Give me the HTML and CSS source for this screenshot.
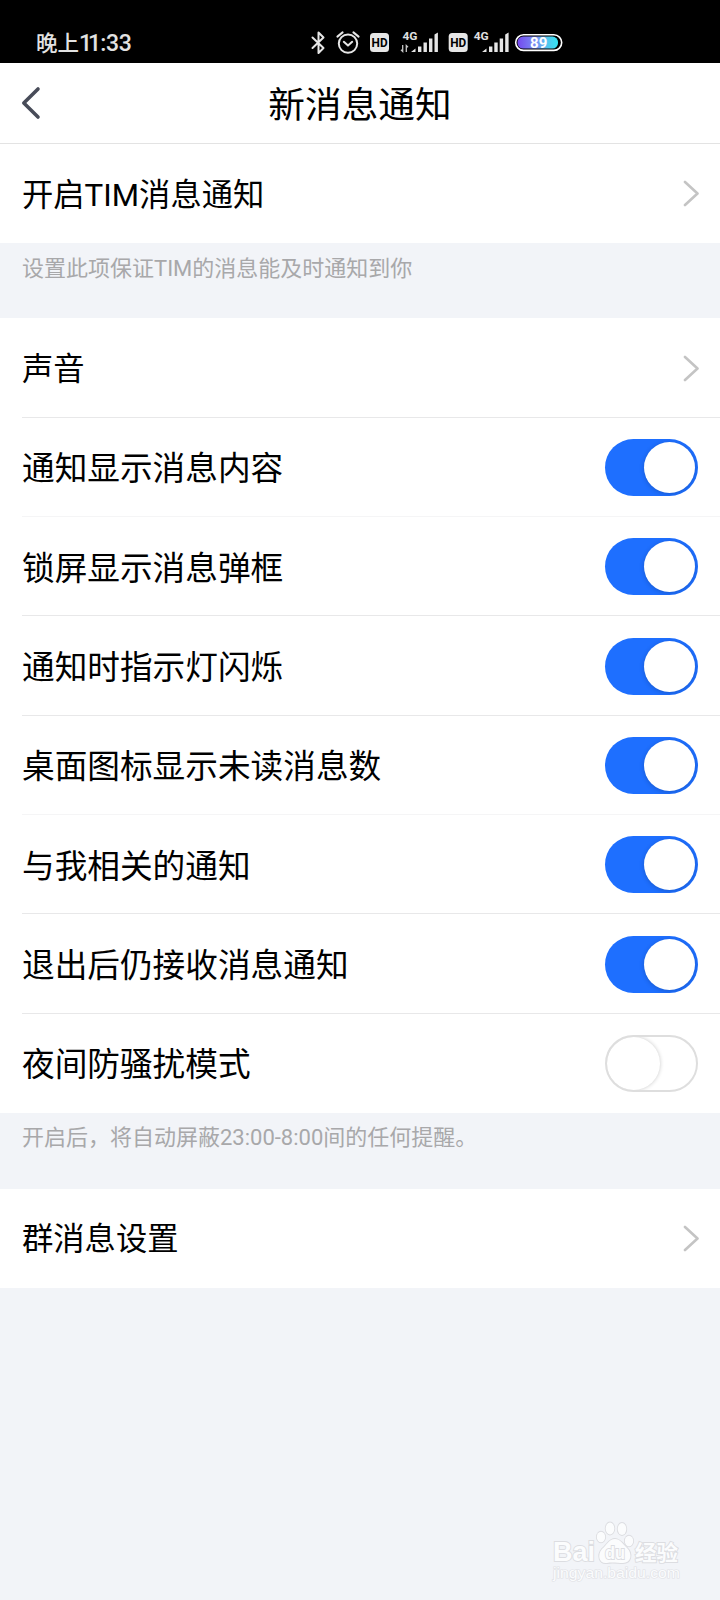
FILE: index.html
```html
<!DOCTYPE html>
<html lang="zh-CN">
<head>
<meta charset="utf-8">
<title>新消息通知</title>
<link rel="stylesheet" href="styles.css">
</head>
<body>
<div class="screen">
  <div class="status">
    <div class="time">晚上<span class="ones">11</span><span class="digits">:33</span></div>
    <svg class="status-icons" width="264" height="30" viewBox="304 28 264 30">
      <defs>
        <linearGradient id="charge" x1="0" x2="1" y1="0" y2="0">
          <stop offset="0" stop-color="#7448ee"/>
          <stop offset=".45" stop-color="#7a90f5"/>
          <stop offset=".75" stop-color="#50c8ee"/>
          <stop offset="1" stop-color="#35e4f2"/>
        </linearGradient>
      </defs>
      <!-- bluetooth -->
      <path class="line" d="M312.5 37.5 L323.5 48 L318.5 53 V32.5 L323.5 37.5 L312.5 48"/>
      <!-- alarm clock -->
      <circle class="line" cx="348" cy="43.6" r="9.2"/>
      <path class="line" d="M343.8 41.8 L348 45.6 L352.2 41.8 M337.4 36.6 L342.6 32.4 M353.4 32.4 L358.6 36.6"/>
      <!-- HD badges -->
      <rect class="fill" x="370" y="33" width="19" height="19" rx="3.5"/>
      <text class="hd" x="371.6" y="47.2" textLength="16" lengthAdjust="spacingAndGlyphs">HD</text>
      <rect class="fill" x="448.7" y="33" width="19" height="19" rx="3.5"/>
      <text class="hd" x="450.3" y="47.2" textLength="16" lengthAdjust="spacingAndGlyphs">HD</text>
      <!-- signal 1 -->
      <text class="net" x="402.5" y="39.5" textLength="15" lengthAdjust="spacingAndGlyphs">4G</text>
      <path class="thin" d="M402.7 45 V51.5 L401 49.8 M406.3 52 V45.5 L408 47.2"/>
      <path class="fill" d="M411 52 L415.5 48.5 V52Z M418 46.5h3.4V52h-3.4z M423.5 42.5h3.4V52h-3.4z M429 38.5h3.4V52h-3.4z M434.5 34.5l3.4-2V52h-3.4z"/>
      <!-- signal 2 -->
      <text class="net" x="473.7" y="39.5" textLength="15" lengthAdjust="spacingAndGlyphs">4G</text>
      <path class="fill" d="M482 52 L486.5 48.5 V52Z M489 46.5h3.4V52h-3.4z M494.3 42.5h3.4V52h-3.4z M499.7 38.5h3.4V52h-3.4z M505.2 34.5l3.4-2V52h-3.4z"/>
      <!-- battery -->
      <rect class="cell" x="515.7" y="34.8" width="46" height="15.6" rx="7.8"/>
      <rect x="517.5" y="36.6" width="40.5" height="12" rx="5.5" fill="url(#charge)"/>
      <text class="level" x="538.7" y="48.2" text-anchor="middle">89</text>
    </svg>
  </div>

  <header class="header">
    <svg class="back" width="24" height="36" viewBox="0 0 24 36"><path d="M17 4 L2.8 18 L17 32"/></svg>
    <h1 class="title">新消息通知</h1>
  </header>

  <div class="group">
    <div class="row link"><span>开启TIM消息通知</span><svg class="chevron" width="16" height="27" viewBox="0 0 16 27"><path d="M2 2 L14.5 13.5 L2 25"/></svg></div>
  </div>
  <p class="note first">设置此项保证TIM的消息能及时通知到你</p>

  <div class="group">
    <div class="row link line-below"><span>声音</span><svg class="chevron" width="16" height="27" viewBox="0 0 16 27"><path d="M2 2 L14.5 13.5 L2 25"/></svg></div>
    <div class="row line-below faint"><span>通知显示消息内容</span><i class="toggle on"></i></div>
    <div class="row line-below"><span>锁屏显示消息弹框</span><i class="toggle on"></i></div>
    <div class="row line-below"><span>通知时指示灯闪烁</span><i class="toggle on"></i></div>
    <div class="row line-below faint"><span>桌面图标显示未读消息数</span><i class="toggle on"></i></div>
    <div class="row line-below"><span>与我相关的通知</span><i class="toggle on"></i></div>
    <div class="row line-below"><span>退出后仍接收消息通知</span><i class="toggle on"></i></div>
    <div class="row"><span>夜间防骚扰模式</span><i class="toggle"></i></div>
  </div>
  <p class="note">开启后，将自动屏蔽23:00-8:00间的任何提醒。</p>

  <div class="group">
    <div class="row link"><span>群消息设置</span><svg class="chevron" width="16" height="27" viewBox="0 0 16 27"><path d="M2 2 L14.5 13.5 L2 25"/></svg></div>
  </div>

  <svg class="watermark" width="150" height="80" viewBox="0 0 150 80">
    <text class="brand" x="13" y="51" textLength="42" lengthAdjust="spacingAndGlyphs">Bai</text>
    <g class="paw">
      <ellipse cx="61" cy="27" rx="4.2" ry="5.3"/>
      <ellipse cx="70" cy="18.5" rx="4.3" ry="6"/>
      <ellipse cx="82" cy="19" rx="4.3" ry="6"/>
      <ellipse cx="89" cy="31" rx="4.2" ry="5.3"/>
      <path d="M75 29 C80 29 83 34 87 38 C93 44 91 53 83 53 C78 53 72 52 67 53 C59 54 57 45 62 39 C67 35 69 29 75 29Z"/>
    </g>
    <text class="du" x="65" y="49" textLength="20" lengthAdjust="spacingAndGlyphs">du</text>
    <text class="exp" x="95" y="50" textLength="43" lengthAdjust="spacingAndGlyphs">经验</text>
    <text class="site" x="13" y="68" textLength="127" lengthAdjust="spacingAndGlyphs">jingyan.baidu.com</text>
  </svg>
</div>
</body>
</html>
```
FILE: styles.css
```css
* { box-sizing: border-box; }
body {
  margin: 0;
  background: #f2f4f8;
  font-family: Roboto, "Noto Sans CJK SC", sans-serif;
  color: #000;
}
.screen {
  position: relative;
  width: 720px;
  height: 1600px;
  overflow: hidden;
  background: #f2f4f8;
}

/* status bar */
.status {
  height: 63px;
  padding: 28px 0 0 36px;
  display: flex;
  background: #000;
}
.time {
  width: 268px;
  padding-top: 1px;
  font-size: 21.5px;
  font-weight: 500;
  line-height: 30px;
  color: #e2e2e2;
  white-space: nowrap;
}
.ones { font-size: 23px; letter-spacing: -4px; margin-right: 3px; }
.digits { font-size: 23px; letter-spacing: -0.3px; }
.status-icons { display: block; }
.line { fill: none; stroke: #e6e6e6; stroke-width: 2; stroke-linejoin: round; stroke-linecap: round; }
.thin { fill: none; stroke: #c8c8c8; stroke-width: 1.3; }
.fill { fill: #e6e6e6; }
.hd { font: 700 13px Roboto, sans-serif; fill: #000; }
.net { font: 700 11px Roboto, sans-serif; fill: #e0e0e0; }
.cell { fill: #000; stroke: #fff; stroke-width: 1.6; }
.level { font: 700 15px Roboto, sans-serif; fill: #fff; }

/* title bar */
.header {
  height: 81px;
  display: grid;
  grid-template-columns: 100px 1fr 100px;
  align-items: center;
  background: #fff;
  border-bottom: 1px solid #e3e3e3;
}
.back { margin-left: 21px; fill: none; stroke: #484c59; stroke-width: 3.6; stroke-linecap: round; stroke-linejoin: round; }
.title {
  margin: 0;
  padding-top: 6px;
  font-size: 36.67px;
  font-weight: 400;
  line-height: 54px;
  text-align: center;
}

/* settings list */
.group { background: #fff; }
.row {
  position: relative;
  height: 99.33px;
  padding: 0 22px;
  display: flex;
  align-items: center;
  justify-content: space-between;
  font-size: 32.67px;
  line-height: 48px;
}
.row span { padding-top: 4px; }
.link { padding-right: 21.5px; font-size: 31.3px; }
.line-below::after {
  content: "";
  position: absolute;
  left: 22px;
  right: 0;
  bottom: 0;
  height: 1px;
  background: #e8e8e9;
}
.faint::after { background: #f5f5f6; }
.chevron { fill: none; stroke: #c4c4c4; stroke-width: 2.6; stroke-linecap: round; stroke-linejoin: round; }
.note {
  height: 75.5px;
  margin: 0;
  padding: 9px 22px 0;
  font-size: 22px;
  line-height: 32px;
  color: #a8a8aa;
}
.first { height: 75.1px; padding-top: 10px; }
.toggle {
  width: 93px;
  height: 57px;
  padding: 2px;
  display: flex;
  border: 2px solid #dedede;
  border-radius: 29px;
  background: #fff;
  overflow: hidden;
}
.toggle::before {
  content: "";
  width: 53px;
  height: 53px;
  margin: -2px;
  border-radius: 50%;
  background: #fff;
  box-shadow: 0 0 4px rgba(0, 0, 0, .22);
}
.toggle.on {
  padding: 3px;
  border: 0;
  background: #1e6fff;
  justify-content: flex-end;
}
.toggle.on::before {
  width: 51px;
  height: 51px;
  margin: 0;
  box-shadow: 0 1px 5px rgba(0, 0, 0, .2);
}

/* watermark */
.watermark { position: absolute; left: 540px; top: 1510px; }
.watermark text, .paw { fill: #fbfcfd; stroke: #dcdde1; stroke-width: 1.8; paint-order: stroke; }
.watermark .brand { font: 700 27px "Liberation Sans", sans-serif; }
.watermark .du { font: 700 18px "Liberation Sans", sans-serif; }
.watermark .exp { font: 700 21px "Noto Sans CJK SC", sans-serif; }
.watermark .site { font: 400 14px "Liberation Sans", sans-serif; stroke-width: 1.2; stroke: #e0e1e5; }
```
